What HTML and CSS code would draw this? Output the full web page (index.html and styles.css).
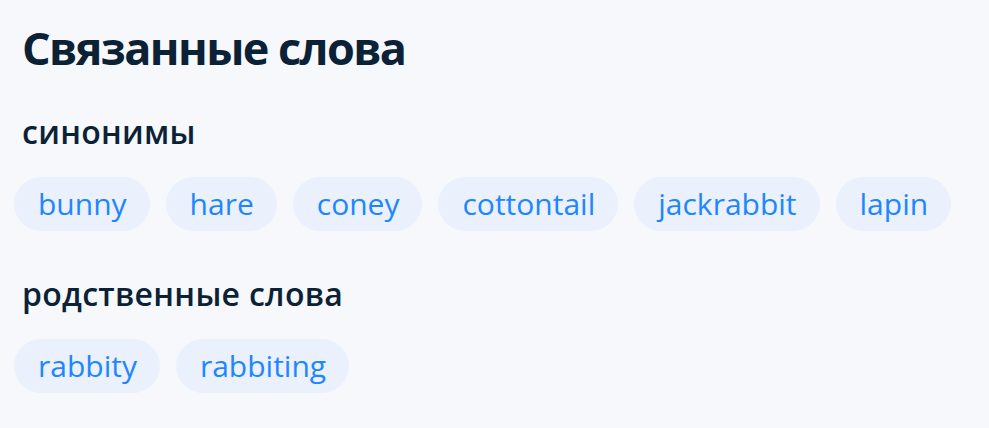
FILE: index.html
```html
<!DOCTYPE html>
<html lang="ru">
<head>
<meta charset="utf-8">
<link rel="stylesheet" href="styles.css">
</head>
<body>
<section class="related">
  <h1 class="title">Связанные слова</h1>
  <div class="group">
    <h2 class="group-title">синонимы</h2>
    <div class="chips">
      <a class="chip">bunny</a>
      <a class="chip">hare</a>
      <a class="chip">coney</a>
      <a class="chip">cottontail</a>
      <a class="chip">jackrabbit</a>
      <a class="chip">lapin</a>
    </div>
  </div>
  <div class="group">
    <h2 class="group-title">родственные слова</h2>
    <div class="chips">
      <a class="chip">rabbity</a>
      <a class="chip">rabbiting</a>
    </div>
  </div>
</section>
</body>
</html>
```
FILE: styles.css
```css
html, body {
  margin: 0;
  padding: 0;
  background: #f6f8fc;
}
body {
  font-family: "Open Sans", "Noto Sans", sans-serif;
  color: #0b2236;
}
.related {
  padding: 20px 14px;
}
.title {
  margin: 0;
  padding-left: 8px;
  font-size: 45px;
  font-weight: 700;
  line-height: 56px;
  letter-spacing: -1.6px;
}
.group {
  margin-top: 36px;
}
.group + .group {
  margin-top: 43px;
}
.group-title {
  margin: 0 0 25px;
  padding-left: 8px;
  font-size: 32px;
  font-weight: 600;
  line-height: 40px;
  letter-spacing: 0.3px;
}
.chips {
  display: flex;
  flex-wrap: wrap;
  gap: 16px;
}
.chip {
  display: inline-flex;
  align-items: center;
  height: 54px;
  padding: 0 23px 0 24px;
  border-radius: 27px;
  background: #eaf1fc;
  color: #1f86ff;
  font-size: 30px;
  line-height: 1;
}
```
